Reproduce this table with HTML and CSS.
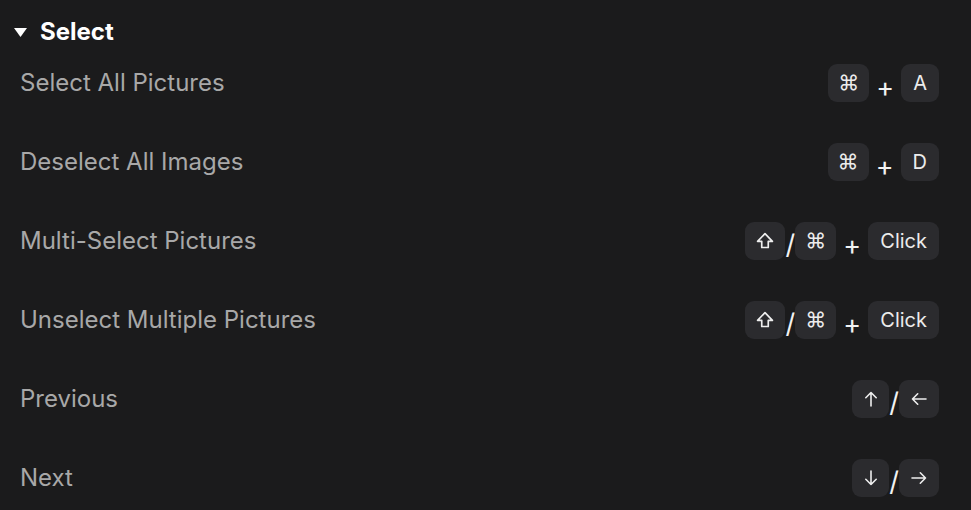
FILE: index.html
```html
<!DOCTYPE html>
<html>
<head>
<meta charset="utf-8">
<link rel="stylesheet" href="styles.css">
</head>
<body>
<section class="group">
  <div class="group-head">
    <svg class="caret" width="13" height="9" viewBox="0 0 13 9"><path d="M0 0 H13 L6.5 9 Z" fill="#fff"/></svg>
    <span class="group-title">Select</span>
  </div>
  <div class="row">
    <span class="label">Select All Pictures</span>
    <span class="combo"><kbd class="key cmd">⌘</kbd><span class="sep plus">+</span><kbd class="key">A</kbd></span>
  </div>
  <div class="row">
    <span class="label">Deselect All Images</span>
    <span class="combo"><kbd class="key cmd">⌘</kbd><span class="sep plus">+</span><kbd class="key">D</kbd></span>
  </div>
  <div class="row">
    <span class="label">Multi-Select Pictures</span>
    <span class="combo"><kbd class="key icon"><svg width="18" height="18" viewBox="0 0 16 16"><path d="M8 1.4 L14.6 8.3 H10.9 V13.8 H5.1 V8.3 H1.4 Z" fill="none" stroke="#eee" stroke-width="1.5" stroke-linejoin="round"/></svg></kbd><span class="sep slash">/</span><kbd class="key cmd">⌘</kbd><span class="sep plus">+</span><kbd class="key">Click</kbd></span>
  </div>
  <div class="row">
    <span class="label">Unselect Multiple Pictures</span>
    <span class="combo"><kbd class="key icon"><svg width="18" height="18" viewBox="0 0 16 16"><path d="M8 1.4 L14.6 8.3 H10.9 V13.8 H5.1 V8.3 H1.4 Z" fill="none" stroke="#eee" stroke-width="1.5" stroke-linejoin="round"/></svg></kbd><span class="sep slash">/</span><kbd class="key cmd">⌘</kbd><span class="sep plus">+</span><kbd class="key">Click</kbd></span>
  </div>
  <div class="row">
    <span class="label">Previous</span>
    <span class="combo"><kbd class="key arrow-v"><svg width="14" height="18" viewBox="0 0 14 18"><path d="M7 16 V2.5 M1.8 7.7 L7 2.5 L12.2 7.7" fill="none" stroke="#eee" stroke-width="1.6" stroke-linecap="round" stroke-linejoin="round"/></svg></kbd><span class="sep slash">/</span><kbd class="key arrow-h"><svg width="18" height="14" viewBox="0 0 18 14"><path d="M16 7 H2.5 M7.7 1.8 L2.5 7 L7.7 12.2" fill="none" stroke="#eee" stroke-width="1.6" stroke-linecap="round" stroke-linejoin="round"/></svg></kbd></span>
  </div>
  <div class="row">
    <span class="label">Next</span>
    <span class="combo"><kbd class="key arrow-v"><svg width="14" height="18" viewBox="0 0 14 18"><path d="M7 2 V15.5 M1.8 10.3 L7 15.5 L12.2 10.3" fill="none" stroke="#eee" stroke-width="1.6" stroke-linecap="round" stroke-linejoin="round"/></svg></kbd><span class="sep slash">/</span><kbd class="key arrow-h"><svg width="18" height="14" viewBox="0 0 18 14"><path d="M2 7 H15.5 M10.3 1.8 L15.5 7 L10.3 12.2" fill="none" stroke="#eee" stroke-width="1.6" stroke-linecap="round" stroke-linejoin="round"/></svg></kbd></span>
  </div>
</section>
</body>
</html>
```

FILE: styles.css
```css
html, body {
  margin: 0;
  padding: 0;
  background: #1b1b1c;
  font-family: Inter, "Liberation Sans", sans-serif;
}

.group {
  padding: 21px 32px 0 14px;
}

.group-head {
  display: flex;
  align-items: center;
  gap: 13px;
  height: 22px;
}

.caret {
  display: block;
  margin-top: 1px;
}

.group-title {
  color: #ffffff;
  font-size: 24px;
  font-weight: 700;
  line-height: 22px;
}

.row {
  display: flex;
  align-items: center;
  justify-content: space-between;
  height: 79px;
  padding-left: 6px;
}

.label {
  color: #a8a8a8;
  font-size: 24px;
  line-height: 28px;
}

.combo {
  display: flex;
  align-items: center;
}

.key {
  display: flex;
  align-items: center;
  justify-content: center;
  min-width: 36px;
  height: 38px;
  box-sizing: border-box;
  padding: 0 12px;
  border-radius: 9px;
  background: #2b2b2e;
  color: #ececec;
  font-family: Inter, "DejaVu Sans", sans-serif;
  font-size: 20px;
}

.key.cmd {
  width: 41px;
  padding: 0;
  font-size: 21px;
}

.key.icon {
  width: 40px;
  padding: 0;
}

.key.arrow-v {
  width: 37px;
  padding: 0;
}

.key.arrow-h {
  width: 40px;
  padding: 0;
}

.sep {
  color: #f2f2f2;
  font-size: 27px;
  line-height: 1;
}

.plus {
  width: 32px;
  text-align: center;
  margin-top: 9px;
}

.slash {
  width: 10px;
  text-align: center;
  margin-top: 7px;
}
```
